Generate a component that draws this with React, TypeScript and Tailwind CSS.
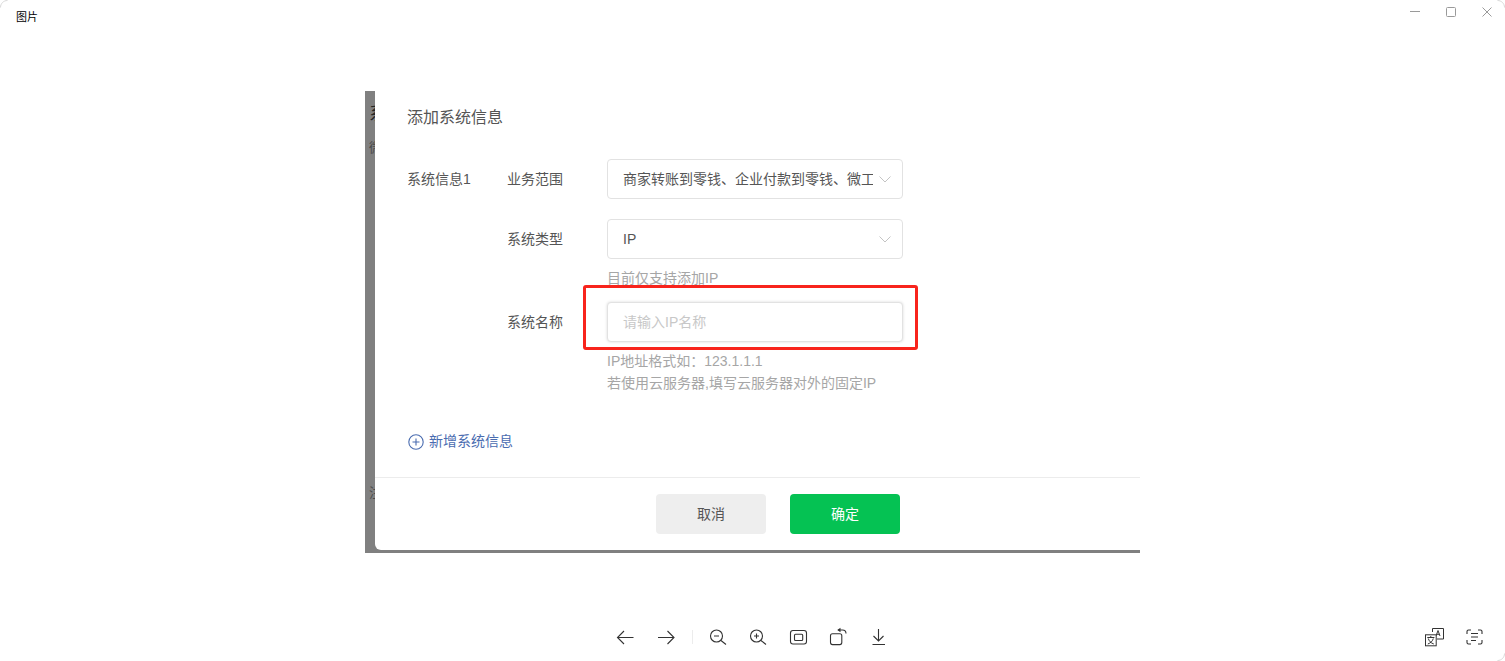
import React from "react";

const font = { fontFamily: '"Liberation Sans", "Noto Sans CJK SC", sans-serif' };

function Chevron() {
  return (
    <svg width="12" height="7" viewBox="0 0 12 7" fill="none" stroke="#c4c4c4" strokeWidth="1">
      <path d="M0.5 0.5L6 6L11.5 0.5" />
    </svg>
  );
}

function Select({ text }: { text: string }) {
  return (
    <div className="flex h-10 w-[296px] items-center justify-between rounded-[4px] border border-[#e2e2e2] bg-white pl-[15px] pr-[11px]">
      <span className="w-[250px] overflow-hidden whitespace-nowrap text-[14px] text-[#555]">{text}</span>
      <Chevron />
    </div>
  );
}

function ToolIcon({ children }: { children: React.ReactNode }) {
  return (
    <div className="flex h-10 w-10 items-center justify-center">
      <svg width="20" height="20" viewBox="0 0 20 20" fill="none" stroke="#333" strokeWidth="1.1">
        {children}
      </svg>
    </div>
  );
}

export default function App() {
  return (
    <div className="relative flex h-[661px] w-[1505px] flex-col overflow-hidden bg-white" style={font}>
      {/* title bar */}
      <div className="flex h-[33px] items-start justify-between">
        <span className="ml-4 mt-[9px] text-[11px] leading-[16px] text-black">图片</span>
        <div className="mr-[13px] mt-[7px] flex items-start gap-[26px]">
          <svg width="10" height="10" viewBox="0 0 10 10" stroke="#9a9a9a" strokeWidth="1" fill="none"><path d="M0 4.5H11" /></svg>
          <svg width="10" height="10" viewBox="0 0 10 10" stroke="#9a9a9a" strokeWidth="1" fill="none"><rect x="0.5" y="0.5" width="9" height="9" rx="1" /></svg>
          <svg width="10" height="10" viewBox="0 0 10 10" stroke="#9a9a9a" strokeWidth="1" fill="none"><path d="M0.5 0.5L9.5 9.5M9.5 0.5L0.5 9.5" /></svg>
        </div>
      </div>

      {/* picture */}
      <div className="flex flex-1 items-start pl-[365px] pt-[58px]">
        <div className="relative flex h-[462px] w-[775px] bg-[#808080]">
          <div className="flex h-full w-[10px] flex-col overflow-hidden pl-[4px] text-[#262626]">
            <span className="mt-[10px] whitespace-nowrap text-[18px] leading-[26px]">系</span>
            <span className="mt-[11px] whitespace-nowrap text-[13px] leading-[20px] text-[#4a4a4a]">微</span>
            <span className="mt-[325px] whitespace-nowrap text-[13px] leading-[20px] text-[#4a4a4a]">注</span>
          </div>
          <div className="mb-[3px] flex flex-1 flex-col rounded-bl-[6px] bg-white">
            <div className="pl-[32px] pt-[15px] text-[16px] leading-[24px] text-[#555]">添加系统信息</div>

            <div className="mt-[29px] flex pl-[32px] text-[14px] text-[#555]">
              <div className="w-[100px] pt-[9px] leading-[22px]">系统信息1</div>
              <div className="flex flex-col">
                <div className="flex">
                  <div className="w-[100px] pt-[9px] leading-[22px]">业务范围</div>
                  <Select text="商家转账到零钱、企业付款到零钱、微工卡" />
                </div>
                <div className="mt-5 flex">
                  <div className="w-[100px] pt-[9px] leading-[22px]">系统类型</div>
                  <div>
                    <Select text="IP" />
                    <div className="mt-[8px] text-[14px] leading-[22px] text-[#a6a6a6]">目前仅支持添加IP</div>
                  </div>
                </div>
                <div className="mt-[13px] flex">
                  <div className="w-[100px] pt-[9px] leading-[22px]">系统名称</div>
                  <div>
                    <div className="flex h-10 w-[296px] items-center rounded-[4px] border border-[#e2e2e2] bg-white pl-[15px] text-[14px] text-[#c8c8c8] shadow-[0_0_3px_rgba(0,0,0,0.15)]">请输入IP名称</div>
                    <div className="mt-[8px] text-[14px] leading-[22px] text-[#a6a6a6]">IP地址格式如：123.1.1.1</div>
                    <div className="text-[14px] leading-[22px] text-[#a6a6a6]">若使用云服务器,填写云服务器对外的固定IP</div>
                  </div>
                </div>
              </div>
            </div>

            <div className="mt-[36px] flex items-center gap-[5px] pl-[33px] text-[14px] leading-[22px] text-[#4a6cb0]">
              <svg width="16" height="16" viewBox="0 0 16 16" fill="none" stroke="#4a6cb0" strokeWidth="1.1">
                <circle cx="8" cy="8" r="7.2" />
                <path d="M8 4.5V11.5M4.5 8H11.5" />
              </svg>
              <span className="pb-[2px]">新增系统信息</span>
            </div>

            <div className="mt-[23px] flex flex-1 justify-center gap-6 border-t border-[#ececec] pl-[41px] pt-4">
              <div className="flex h-10 w-[110px] items-center justify-center rounded-[4px] bg-[#eeeeee] text-[14px] text-[#555]">取消</div>
              <div className="flex h-10 w-[110px] items-center justify-center rounded-[4px] bg-[#05c253] text-[14px] text-white">确定</div>
            </div>
          </div>
        </div>
      </div>

      {/* toolbar */}
      <div className="grid h-[48px] grid-cols-[1fr_auto_1fr] py-[4px]">
        <div />
        <div className="flex items-center pr-[1px]">
          <ToolIcon><path d="M17.5 10.5H1.5M8 4L1.5 10.5L8 17" /></ToolIcon>
          <ToolIcon><path d="M2 10.5H18M11.5 4L18 10.5L11.5 17" /></ToolIcon>
          <div className="flex w-3 justify-center"><div className="h-[14px] w-px bg-[#ececec]" /></div>
          <ToolIcon>
            <circle cx="8.5" cy="9" r="6" /><path d="M13 13.5L18 17.5M6 9H11" />
          </ToolIcon>
          <ToolIcon>
            <circle cx="8.5" cy="9" r="6" /><path d="M13 13.5L18 17.5M6 9H11M8.5 6.5V11.5" />
          </ToolIcon>
          <ToolIcon>
            <rect x="2.5" y="3.5" width="16" height="13.5" rx="2.5" /><rect x="6.5" y="7.3" width="8.2" height="6.2" rx="1" />
          </ToolIcon>
          <ToolIcon>
            <rect x="2.5" y="6.8" width="11.3" height="10.8" rx="2" /><path d="M10 3H14.5C16.8 3 18 4.2 18 6.5" />
            <path d="M12.5 0.8L9.2 3L12.5 5.2Z" fill="#333" stroke="none" />
          </ToolIcon>
          <ToolIcon><path d="M10.5 2V14M5.5 9L10.5 14L15.5 9M4.5 17.5H17" /></ToolIcon>
        </div>
        <div className="flex items-center justify-end pr-[11px]">
          <div className="flex h-10 w-10 items-center justify-center">
            <svg width="20" height="20" viewBox="0 0 20 20" fill="none" stroke="#333" strokeWidth="1">
              <path d="M8.5 5V1.5H19.5V12H13" />
              <path d="M12 9L14 3.5L16 9M12.7 7.3H15.3" />
              <rect x="1.5" y="7.8" width="10.7" height="11" fill="#fff" />
              <path d="M3.3 10.5H10.4M6.8 9V10.5M4.3 11.5C5 14 6.8 16 9.8 17M9.3 11.5C8.6 14 6.8 16 3.8 17" />
            </svg>
          </div>
          <div className="flex h-10 w-10 items-center justify-center">
            <svg width="17" height="16" viewBox="0 0 17 16" fill="none" stroke="#333" strokeWidth="1.1">
              <path d="M1 5V2.5C1 1.5 1.5 1 2.5 1H5M12 1H14.5C15.5 1 16 1.5 16 2.5V5M16 11V13.5C16 14.5 15.5 15 14.5 15H12M5 15H2.5C1.5 15 1 14.5 1 13.5V11" />
              <path d="M5 4.5H12M5 8H12M5 11.5H10" />
            </svg>
          </div>
        </div>
      </div>

      {/* annotation drawn over the picture */}
      <div className="pointer-events-none absolute left-[583px] top-[285px] h-[65px] w-[335px] rounded-[3px] border-[3px] border-[#f8241c]" />

      {/* window corner arcs */}
      <svg className="absolute left-0 top-0" width="8" height="8" fill="none" stroke="#d8d8d8"><path d="M0.5 7.5C0.5 3.5 3.5 0.5 7.5 0.5" /></svg>
      <svg className="absolute right-0 top-0" width="8" height="8" fill="none" stroke="#d8d8d8"><path d="M0.5 0.5C4.5 0.5 7.5 3.5 7.5 7.5" /></svg>
      <svg className="absolute bottom-0 right-0" width="8" height="8" fill="none" stroke="#d8d8d8"><path d="M7.5 0.5C7.5 4.5 4.5 7.5 0.5 7.5" /></svg>
    </div>
  );
}
